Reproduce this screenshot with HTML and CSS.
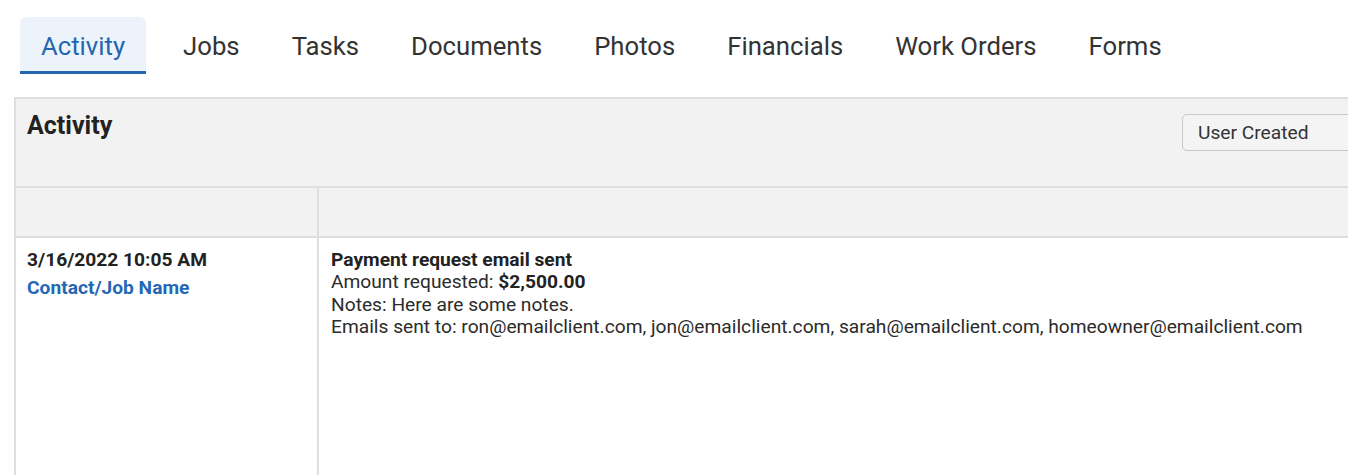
FILE: index.html
```html
<!DOCTYPE html>
<html>
<head>
<meta charset="utf-8">
<link rel="stylesheet" href="styles.css">
</head>
<body>
<nav class="tabs">
  <a class="tab active">Activity</a>
  <a class="tab">Jobs</a>
  <a class="tab">Tasks</a>
  <a class="tab">Documents</a>
  <a class="tab">Photos</a>
  <a class="tab">Financials</a>
  <a class="tab">Work Orders</a>
  <a class="tab">Forms</a>
</nav>
<section class="panel">
  <header class="panel-head">
    <h2 class="panel-title">Activity</h2>
    <div class="select">User Created</div>
  </header>
  <div class="table">
    <div class="row head-row">
      <div class="cell col-left"></div>
      <div class="cell col-right"></div>
    </div>
    <div class="row body-row">
      <div class="cell col-left">
        <div class="date">3/16/2022 10:05 AM</div>
        <a class="link">Contact/Job Name</a>
      </div>
      <div class="cell col-right">
        <div class="strong">Payment request email sent</div>
        <div>Amount requested: <b>$2,500.00</b></div>
        <div>Notes: Here are some notes.</div>
        <div>Emails sent to: ron@emailclient.com, jon@emailclient.com, sarah@emailclient.com, homeowner@emailclient.com</div>
      </div>
    </div>
  </div>
</section>
</body>
</html>
```
FILE: styles.css
```css
html, body {
  margin: 0;
  padding: 0;
  background: #fff;
  overflow: hidden;
  font-family: Roboto, "Liberation Sans", sans-serif;
  color: #2b2b2b;
}
.tabs {
  display: flex;
  gap: 10px;
  padding: 17px 0 0 20px;
}
.tab {
  display: block;
  font-size: 25.7px;
  line-height: 49px;
  padding: 5px 21px 0 21px;
  color: #333;
  border-bottom: 3px solid transparent;
  border-radius: 6px 6px 0 0;
}
.tab.active {
  background: #edf3fa;
  color: #2566b0;
  border-bottom-color: #2566b0;
  margin-right: 6px;
}
.panel {
  margin: 23px 0 0 14px;
  width: 1423px;
  border: 2px solid #dedede;
  border-right: none;
  border-bottom: none;
  height: 400px;
}
.panel-head {
  display: flex;
  justify-content: space-between;
  align-items: flex-start;
  background: #f2f2f2;
  height: 87px;
  border-bottom: 2px solid #dedede;
}
.panel-title {
  margin: 0;
  padding: 13px 0 0 11px;
  font-size: 25px;
  line-height: 28px;
  font-weight: 700;
  color: #222;
}
.select {
  margin: 15px 0 0 0;
  width: 240px;
  height: 35px;
  box-sizing: content-box;
  border: 1px solid #c8c8c8;
  border-radius: 5px;
  background: #f4f4f4;
  font-size: 19.2px;
  line-height: 35px;
  padding: 0 0 0 15px;
  color: #333;
}
.table {
  display: flex;
  flex-direction: column;
}
.row {
  display: flex;
}
.head-row {
  height: 48px;
  background: #f2f2f2;
  border-bottom: 2px solid #dedede;
}
.col-left {
  width: 301px;
  flex: none;
  border-right: 2px solid #dedede;
}
.col-right {
  flex: 1;
}
.body-row {
  height: 260px;
  font-size: 19.2px;
  line-height: 22.4px;
}
.body-row .col-left {
  padding: 11px 0 0 11px;
  width: 290px;
}
.body-row .col-right {
  padding: 11px 0 0 12px;
}
.date {
  font-weight: 700;
  color: #222;
  margin-bottom: 6px;
}
.link {
  display: block;
  font-weight: 700;
  color: #2467b5;
}
.strong {
  font-weight: 700;
  color: #222;
}
b {
  color: #222;
}
```
